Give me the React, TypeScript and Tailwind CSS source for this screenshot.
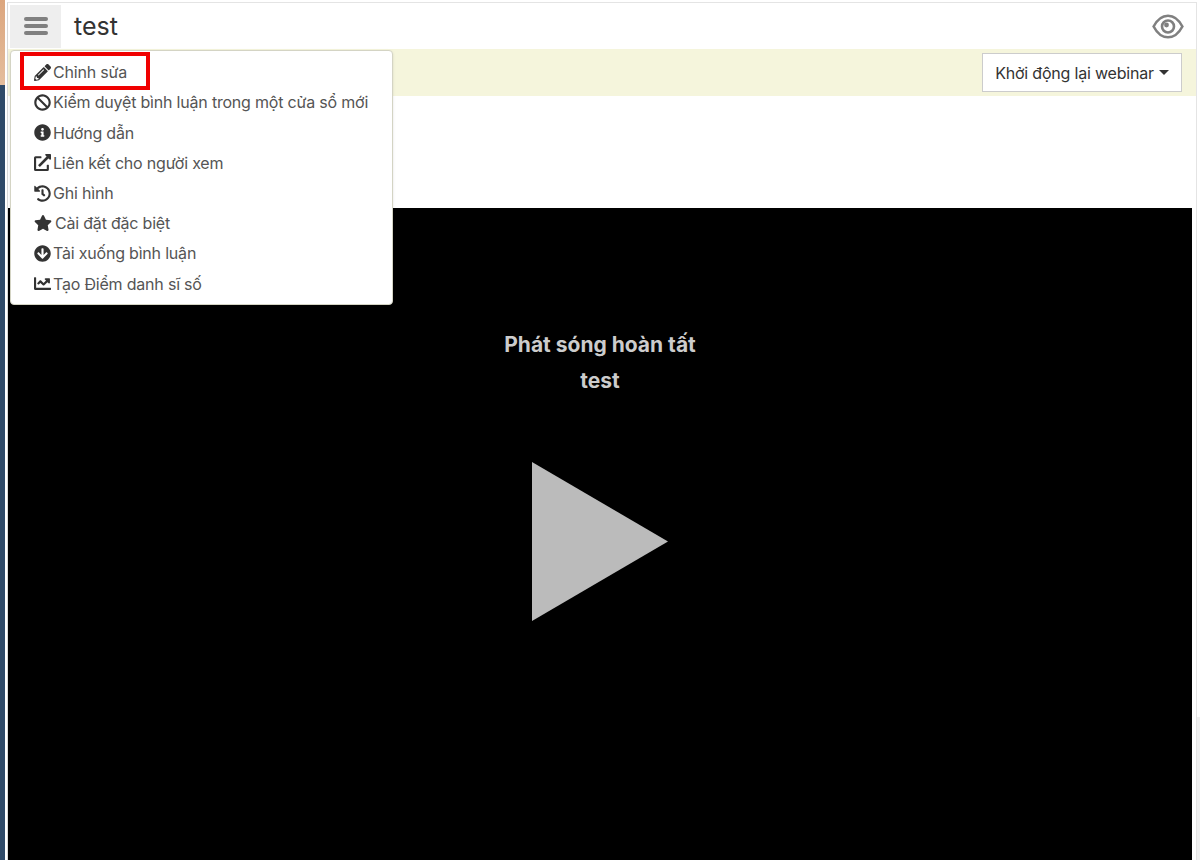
import {
  FaBan,
  FaChartLine,
  FaExternalLinkAlt,
  FaHistory,
  FaInfoCircle,
  FaPencilAlt,
  FaStar,
  FaArrowCircleDown,
} from 'react-icons/fa';

const menuItems = [
  { label: 'Kiểm duyệt bình luận trong một cửa sổ mới', icon: FaBan, iconSize: 'h-[17px] w-[17px]', gap: 'gap-[2px]' },
  { label: 'Hướng dẫn', icon: FaInfoCircle, iconSize: 'h-[17px] w-[17px]', gap: 'gap-[2px]' },
  { label: 'Liên kết cho người xem', icon: FaExternalLinkAlt, iconSize: 'h-[17px] w-[17px]', gap: 'gap-[2px]' },
  { label: 'Ghi hình', icon: FaHistory, iconSize: 'h-[17px] w-[17px]', gap: 'gap-[2px]' },
  { label: 'Cài đặt đặc biệt', icon: FaStar, iconSize: 'h-[18px] w-[18px]', gap: 'gap-[3px]' },
  { label: 'Tải xuống bình luận', icon: FaArrowCircleDown, iconSize: 'h-[17px] w-[17px]', gap: 'gap-[2px]' },
  { label: 'Tạo Điểm danh sĩ số', icon: FaChartLine, iconSize: 'h-[17px] w-[17px]', gap: 'gap-[2px]' },
];

function EyeIcon() {
  return (
    <svg className="ml-auto" width="32" height="25" viewBox="0 0 32 25" fill="none" stroke="#808080">
      <path d="M1.6 12.5C5 6 10 1.7 16 1.7s11 4.3 14.4 10.8C27 19 22 23.3 16 23.3S5 19 1.6 12.5Z" strokeWidth="2.6" />
      <circle cx="16" cy="12.5" r="6" strokeWidth="2.6" />
      <circle cx="14.5" cy="11" r="2.4" fill="#808080" stroke="none" />
    </svg>
  );
}

function DropdownMenu() {
  return (
    <div className="absolute left-[10px] top-[50px] z-10 h-[255px] w-[383px] rounded-[4px] border border-[#d4d4c4] bg-white pl-[23px] pt-[6.3px] text-[16px] leading-[30.2px] tracking-[-0.2px] text-[#555] shadow-sm">
      <div className="relative flex h-[30.2px] items-center gap-[2px]">
        <div className="absolute left-[-14px] top-[-5px] h-[38px] w-[130px] border-[4px] border-[#f00000]" />
        <FaPencilAlt className="h-[17px] w-[17px] text-[#333]" />
        <span>Chỉnh sửa</span>
      </div>
      {menuItems.map((item) => (
        <div key={item.label} className={`flex h-[30.2px] items-center ${item.gap}`}>
          <item.icon className={`${item.iconSize} shrink-0 text-[#333]`} />
          <span className="whitespace-nowrap">{item.label}</span>
        </div>
      ))}
    </div>
  );
}

export default function App() {
  return (
    <div className="relative flex h-[860px] w-[1200px] overflow-hidden bg-white font-['Inter','Noto_Sans',sans-serif]">
      <div className="flex w-[5px] shrink-0 flex-col">
        <div className="h-[85px] bg-gradient-to-b from-[#dca67e] to-[#e4bd9c]" />
        <div className="flex-1 bg-[#2f4a68]" />
      </div>
      <div className="w-[2px] shrink-0 bg-white" />
      <main className="mt-[2px] flex w-[1190px] shrink-0 flex-col border-x border-t border-[#e4e4e4] border-l-[#d8d8d8]">
        <header className="flex h-[46px] items-center pl-[2px] pr-[12px]">
          <div className="flex h-[43px] w-[51px] flex-col items-center justify-center gap-[3.5px] bg-[#eeeeee]">
            <div className="h-[3.5px] w-[24px] rounded-full bg-[#808080]" />
            <div className="h-[3.5px] w-[24px] rounded-full bg-[#808080]" />
            <div className="h-[3.5px] w-[24px] rounded-full bg-[#808080]" />
          </div>
          <h1 className="ml-[13px] text-[25px] leading-none text-[#333]">test</h1>
          <EyeIcon />
        </header>
        <div className="flex h-[47px] items-center justify-end bg-[#f5f5dc] pr-[14px]">
          <button
            type="button"
            className="flex h-[39px] w-[200px] items-center justify-center gap-[5px] border border-[#ccc] bg-white text-[16px] tracking-[-0.2px] text-[#333]"
          >
            Khởi động lại webinar
            <span className="h-0 w-0 border-x-[5px] border-t-[5px] border-x-transparent border-t-[#333]" />
          </button>
        </div>
        <div className="h-[112px] bg-white" />
        <section className="mr-[4px] flex flex-1 flex-col items-center bg-black pt-[119px]">
          <p className="text-[21px] font-bold leading-[36px] text-[#cccccc]">Phát sóng hoàn tất</p>
          <p className="text-[21px] font-bold leading-[36px] text-[#cccccc]">test</p>
          <svg className="ml-[-1px] mt-[63px]" width="136" height="159" viewBox="0 0 136 159">
            <polygon points="0,0 136,79.5 0,159" fill="#bbbbbb" />
          </svg>
        </section>
      </main>
      <div className="flex flex-1 flex-col">
        <div className="h-[717px]" />
        <div className="flex-1 bg-[#f0f0f0]" />
      </div>
      <DropdownMenu />
    </div>
  );
}
